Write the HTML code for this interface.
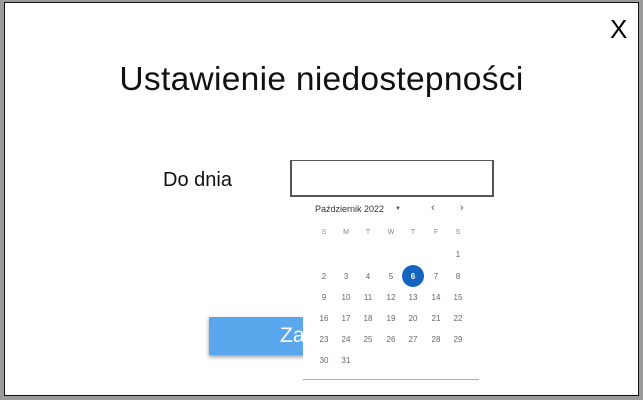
<!DOCTYPE html><html><head><style>
body{margin:0;width:643px;height:400px;background:#9a9a9a;position:relative;overflow:hidden;font-family:"Liberation Sans",sans-serif}
.win{position:absolute;left:4px;top:2px;width:633px;height:392px;background:#fff;border:1px solid #111}
.abs{position:absolute}
.d{position:absolute;width:22px;text-align:center;font-size:8px;color:#666;transform:translateX(-11px)}
</style></head><body>
<div class="win"></div>
<div class="abs" style="left:610px;top:14px;font-size:26px;color:#000">X</div>
<div class="abs" style="left:0;width:643px;top:61px;text-align:center;font-size:33.5px;color:#111;letter-spacing:0.3px">Ustawienie niedostepności</div>
<div class="abs" style="left:163px;top:169px;font-size:20px;color:#111">Do dnia</div>
<div class="abs" style="left:290px;top:160px;width:200px;height:34px;border:2px solid #555;border-top-width:1.5px"></div>
<div class="abs" style="left:209px;top:317px;width:120px;height:38px;background:#5aa7ee;box-shadow:0 2px 4px rgba(0,0,0,.4)"></div>
<div class="abs" style="left:280px;top:324px;font-size:21px;color:#fff">Za</div>
<div class="abs" style="left:303px;top:198px;width:176px;height:181px;background:#fff;border-bottom:1.5px solid #aaa"></div>
<div class="abs" style="left:315px;top:204px;font-size:9px;color:#333">Październik 2022</div>
<div class="abs" style="left:395px;top:206px;font-size:6px;color:#555">▼</div>
<div class="abs" style="left:431px;top:202px;font-size:11px;color:#555">‹</div>
<div class="abs" style="left:460px;top:202px;font-size:11px;color:#555">›</div>
<div class="abs" style="left:402px;top:265px;width:22px;height:22px;border-radius:50%;background:#1565c0"></div>
<div id="cal"></div>
<script>
var xs=[324,346,368,391,413,436,458],ys=[254,276,297,318,339,360],h='';
"SMTWTFS".split('').forEach((c,i)=>h+='<div class="d" style="left:'+xs[i]+'px;top:229px;font-size:7px;color:#888">'+c+'</div>');
for(var n=1;n<=31;n++){var p=n+5,r=Math.floor(p/7),c=p%7;
h+='<div class="d" style="left:'+xs[c]+'px;top:'+(ys[r]-4)+'px;'+(n==6?'color:#fff;font-weight:bold':'')+'">'+n+'</div>';}
document.getElementById('cal').innerHTML=h;
</script>
</body></html>
